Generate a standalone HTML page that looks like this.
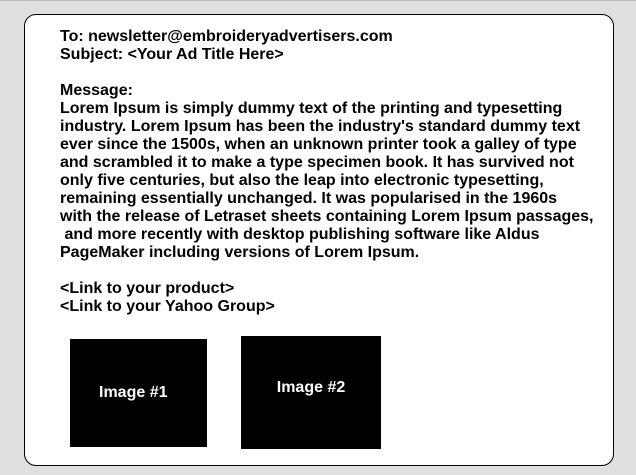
<!DOCTYPE html>
<html><head><style>
html,body{margin:0;padding:0;width:636px;height:475px;background:#e0e0e0;overflow:hidden}
body{border-top:1px solid #bdbdbd;box-sizing:border-box}
.box{position:absolute;left:24px;top:14px;width:590px;height:452px;background:#fff;border:1px solid #000;border-radius:12px;box-sizing:border-box}
.t{position:absolute;left:60px;top:28px;font:bold 16px/18px "Liberation Sans",Arial,sans-serif;color:#000;white-space:pre}
.img{position:absolute;background:#000;color:#fff;font:bold 16px "Liberation Sans",Arial,sans-serif;display:flex;align-items:center;justify-content:center}
</style></head><body>
<div class="box"></div>
<div class="t">To: newsletter@embroideryadvertisers.com
Subject: &lt;Your Ad Title Here&gt;

Message:
Lorem Ipsum is simply dummy text of the printing and typesetting
industry. Lorem Ipsum has been the industry's standard dummy text
ever since the 1500s, when an unknown printer took a galley of type
and scrambled it to make a type specimen book. It has survived not
only five centuries, but also the leap into electronic typesetting,
remaining essentially unchanged. It was popularised in the 1960s
with the release of Letraset sheets containing Lorem Ipsum passages,
 and more recently with desktop publishing software like Aldus
PageMaker including versions of Lorem Ipsum.

&lt;Link to your product&gt;
&lt;Link to your Yahoo Group&gt;</div>
<div class="img" style="left:70px;top:339px;width:137px;height:108px;justify-content:flex-start;padding-left:29px;box-sizing:border-box">Image #1</div>
<div class="img" style="left:241px;top:336px;width:140px;height:113px;align-items:flex-start;padding-top:43px;box-sizing:border-box">Image #2</div>
</body></html>
